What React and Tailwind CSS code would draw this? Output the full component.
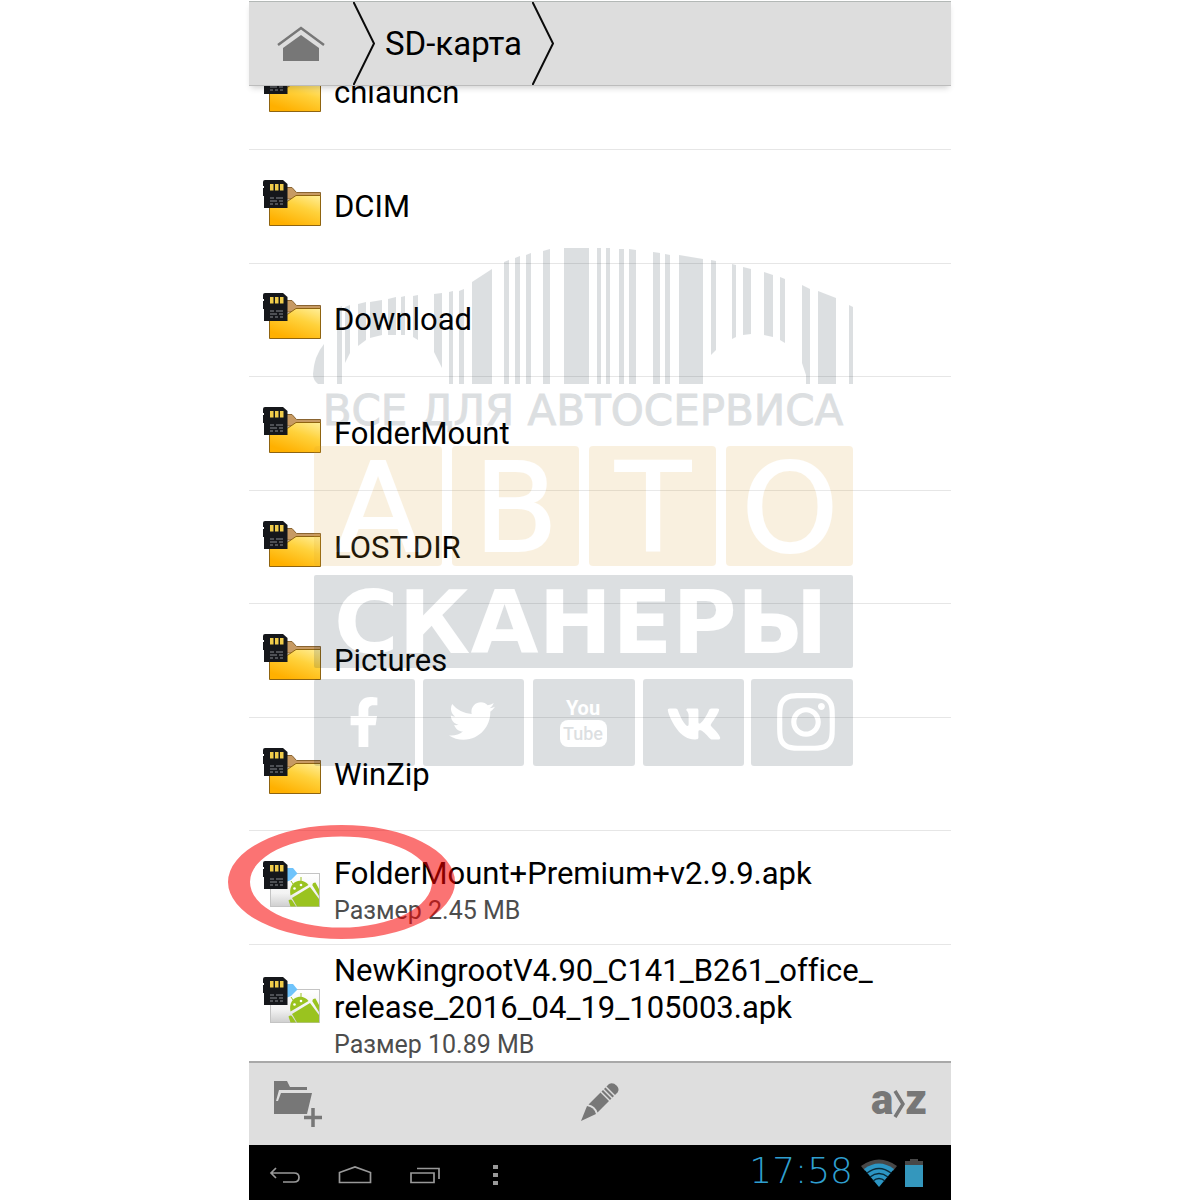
import React from 'react';
import { FaFacebookF, FaTwitter, FaVk, FaInstagram } from 'react-icons/fa';

const items = [
  { name: 'DCIM' },
  { name: 'Download' },
  { name: 'FolderMount' },
  { name: 'LOST.DIR' },
  { name: 'Pictures' },
  { name: 'WinZip' },
  { name: 'FolderMount+Premium+v2.9.9.apk', size: '2.45 MB', marked: true },
];

// [left, right, topLeft, topRight, bottomLeft, bottomRight]
const bars = [
  [24, 29, 60, 58, 136, 136],
  [32, 37, 59, 57, 115, 105],
  [45, 53, 56, 54, 98, 92],
  [57, 69, 54, 52, 90, 87],
  [75, 83, 51, 49, 87, 87],
  [88, 92, 49, 48, 87, 87],
  [100, 105, 48, 47, 89, 92],
  [121, 129, 46, 45, 104, 120],
  [136, 140, 44, 43, 136, 136],
  [146, 151, 43, 41, 136, 136],
  [159, 179, 34, 21, 136, 136],
  [191, 196, 14, 12, 136, 136],
  [202, 207, 10, 8, 136, 136],
  [213, 218, 7, 5, 136, 136],
  [230, 237, 3, 1, 136, 136],
  [251, 276, 0, 0, 136, 136],
  [284, 288, 0, 0, 136, 136],
  [293, 297, 0, 0, 136, 136],
  [306, 311, 1, 1, 136, 136],
  [316, 323, 1, 2, 136, 136],
  [340, 347, 4, 5, 136, 136],
  [352, 357, 6, 7, 136, 136],
  [366, 390, 7, 11, 136, 136],
  [398, 403, 12, 13, 107, 102],
  [419, 423, 16, 17, 91, 89],
  [430, 438, 19, 21, 87, 86],
  [451, 460, 24, 27, 87, 89],
  [467, 472, 29, 31, 92, 95],
  [505, 523, 43, 50, 136, 136],
  [536, 540, 57, 59, 136, 136],
];

const tiles = [
  { letter: 'А', x: 1, width: 128 },
  { letter: 'В', x: 139, width: 127 },
  { letter: 'Т', x: 276, width: 127 },
  { letter: 'О', x: 413, width: 127 },
];

function SdCard() {
  return (
    <g>
      <path d="M2 1H20L24.500 5V29H1V17H0V9H1V7H0V3Q0 1 2 1Z" fill="#15171b" />
      <path d="M7 5h3.500v6.500H7zM12 5h3.500v6.500H12zM17 5h3.500v6.500H17z" fill="#f0cc4a" />
      <path d="M7 19h4M13 19h7M7 22h7M16 22h4M7 25h3M12 25h3M17 25h3" stroke="#888b90" strokeWidth="1" />
    </g>
  );
}

function FolderIcon() {
  return (
    <svg className="w-[58px] h-[55px] shrink-0" viewBox="0 0 58 55">
      <defs>
        <linearGradient id="folderFront" x1="1" y1="0" x2="0.400" y2="1">
          <stop offset="0" stopColor="#ffef9a" />
          <stop offset="0.450" stopColor="#ffd23c" />
          <stop offset="1" stopColor="#ffb000" />
        </linearGradient>
      </defs>
      <path d="M22 8.500H29L33.500 13.500H57.500V20H22Z" fill="#c79a63" stroke="#8a6430" />
      <path d="M6.500 22H25L33 16.500H57.500V46.500H6.500Z" fill="url(#folderFront)" stroke="#8f6410" />
      <SdCard />
    </svg>
  );
}

function ApkIcon() {
  return (
    <svg className="w-[58px] h-[55px] shrink-0" viewBox="0 0 58 55">
      <defs>
        <linearGradient id="apkCard" x1="0" y1="0" x2="0" y2="1">
          <stop offset="0" stopColor="#ffffff" />
          <stop offset="0.600" stopColor="#f3f3f3" />
          <stop offset="1" stopColor="#cfcfcf" />
        </linearGradient>
      </defs>
      <rect x="7.500" y="13.500" width="49" height="33" fill="url(#apkCard)" stroke="#c4c4c4" />
      <path d="M23 8H30L34.500 13.500L28 20L23 22Z" fill="#6fc3fb" />
      <g fill="#9ac31f">
        <path d="M27.500 35.500C26 28 29 22.500 35 21C39 20 43.500 22 45.500 25Z" />
        <path d="M29 38L47 27L56 39V46.500H34Z" />
        <path d="M25.500 40.500Q28 38.500 29.500 41L33 46.500H27.500Z" />
        <path d="M49.500 25.500Q49 22.500 52.500 22.500L56 29V36Z" />
      </g>
      <path d="M30 24L28 21M38 21L38 17" stroke="#9ac31f" strokeWidth="1" />
      <circle cx="31.500" cy="28.500" r="1.300" fill="#fff" />
      <circle cx="38" cy="25" r="1.300" fill="#fff" />
      <SdCard />
    </svg>
  );
}

function Chevron() {
  return (
    <svg className="w-[22px] h-[83px] shrink-0" viewBox="0 0 22 83" fill="none">
      <path d="M0.500 0L21 41.500L0.500 83" stroke="#0a0a0a" strokeWidth="2" />
    </svg>
  );
}

function Watermark() {
  return (
    <svg
      className="absolute left-16 top-[162px] w-[540px] h-[520px] opacity-15 pointer-events-none"
      viewBox="0 0 540 520"
      aria-hidden="true"
    >
      <g fill="#1c3040">
        <path d="M11 96V136H5Q0 132 0 126Q1 108 11 96Z" />
        {bars.map(([l, r, tl, tr, bl, br]) => (
          <polygon key={l} points={`${l},${tl} ${r},${tr} ${r},${br} ${l},${bl}`} />
        ))}
        <path d="M489 37L497 41V136H493V127L489 115Z" />
        <text
          x="270"
          y="177"
          textAnchor="middle"
          fontSize="42"
          fontFamily="DejaVu Sans, sans-serif"
          stroke="#1c3040"
          strokeWidth="1"
        >
          ВСЕ ДЛЯ АВТОСЕРВИСА
        </text>
        <rect x="1" y="327" width="539" height="93" rx="2" />
        <rect x="1" y="431" width="101" height="87" rx="3" />
        <rect x="110" y="431" width="101" height="87" rx="3" />
        <rect x="220" y="431" width="102" height="87" rx="3" />
        <rect x="330" y="431" width="101" height="87" rx="3" />
        <rect x="438" y="431" width="102" height="87" rx="3" />
      </g>

      {tiles.map((t) => (
        <g key={t.letter}>
          <rect x={t.x} y="198" width={t.width} height="120" rx="4" fill="#dea230" />
          <text
            x={t.x + 64}
            y="303"
            textAnchor="middle"
            fontSize="123"
            fontFamily="DejaVu Sans, sans-serif"
            fill="#fff"
            stroke="#fff"
            strokeWidth="2"
          >
            {t.letter}
          </text>
        </g>
      ))}

      <text x="268" y="405" textAnchor="middle" fontSize="88" fontWeight="700" fontFamily="DejaVu Sans, sans-serif" fill="#fff">
        СКАНЕРЫ
      </text>

      <FaFacebookF x="26" y="449" size={50} color="#fff" />
      <FaTwitter x="136" y="450" size={46} color="#fff" />
      <FaVk x="353" y="448" size={56} color="#fff" />
      <FaInstagram x="460" y="441" size={66} color="#fff" />

      {/* YouTube */}
      <text x="270" y="467" textAnchor="middle" fontSize="20" fontWeight="700" fontFamily="Roboto, sans-serif" fill="#fff">
        You
      </text>
      <rect x="247" y="472" width="47" height="27" rx="8" fill="#fff" />
      <text x="270" y="492" textAnchor="middle" fontSize="18" fontWeight="500" fontFamily="Roboto, sans-serif" fill="#1c3040">
        Tube
      </text>
    </svg>
  );
}

function Row({ icon, title, size }) {
  return (
    <a href="#" className="flex items-center gap-[13px] w-full px-3.5">
      {icon}
      <div className={size ? 'pt-2' : ''}>
        <p className="text-[31px] leading-[37px] text-black">{title}</p>
        {size && <p className="text-[25px] leading-[37px] text-[#4d4d4d]">Размер {size}</p>}
      </div>
    </a>
  );
}

export default function App() {
  return (
    <div className="min-h-screen bg-white overflow-x-hidden [font-variant-ligatures:none] font-['Roboto','Noto_Sans',sans-serif]">
      <div className="flex flex-col min-h-screen w-full max-w-[702px] mx-auto">
        {/* Breadcrumbs */}
        <header className="relative z-10 mt-px h-[85px] shrink-0 flex items-center bg-[#ddd] border-t border-b border-t-[#b3b8b6] border-b-[#bcbcbc] shadow-[0_4px_6px_-2px_rgba(0,0,0,0.18)]">
          <button aria-label="Home" className="pl-7 pr-7">
            <svg className="w-12 h-9" viewBox="0 0 48 36" fill="none">
              <path d="M1 19L24 2L47 19" stroke="#777" strokeWidth="2.500" />
              <path d="M24 9L42 22V35H6V22Z" fill="#777" />
            </svg>
          </button>
          <Chevron />
          <a href="#" className="px-2.5 text-[33px] leading-[37px] text-black">SD-карта</a>
          <Chevron />
        </header>

        <main className="relative flex-1 flex flex-col">
          <ul className="flex-1 flex flex-col">
            {/* scrolled half way under the header */}
            <li className="h-16 shrink-0 overflow-hidden flex items-end border-b border-[#e6e6e6]">
              <div className="h-[114px] w-full shrink-0 flex">
                <Row icon={<FolderIcon />} title="cnlaunch" />
              </div>
            </li>
            {items.map((item) => (
              <li key={item.name} className="relative grow basis-28 flex border-b border-[#e6e6e6]">
                <Row
                  icon={item.size ? <ApkIcon /> : <FolderIcon />}
                  title={item.name}
                  size={item.size}
                />
                {item.marked && (
                  <svg
                    className="absolute -left-[21px] -top-[6px] w-[228px] h-[114px] pointer-events-none"
                    viewBox="0 0 228 114"
                  >
                    <path
                      fillRule="evenodd"
                      fill="#f80000"
                      fillOpacity="0.550"
                      d="M0 57A113.500 57 0 0 1 227 57A113.500 57 0 0 1 0 57ZM22 57A91 45.500 0 0 0 204 57A91 45.500 0 0 0 22 57Z"
                    />
                  </svg>
                )}
              </li>
            ))}
            <li className="h-[116px] shrink-0 flex">
              <Row
                icon={<ApkIcon />}
                title={<>NewKingrootV4.90_C141_B261_office_<br />release_2016_04_19_105003.apk</>}
                size="10.89 MB"
              />
            </li>
          </ul>
          <Watermark />
        </main>

        {/* Actions */}
        <div className="relative h-[84px] shrink-0 grid grid-cols-3 items-center px-6 bg-[#dedede] border-t-2 border-[#a9a9a9]">
          <button aria-label="New folder" className="justify-self-start">
            <svg className="w-[50px] h-[48px]" viewBox="0 0 50 48">
              <path d="M1 1H14L17 7H34V10H6L3 21L5 21L8 13H39L34 34H1Z" fill="#777" />
              <path d="M40 28V47M31 37.500H49" stroke="#777" strokeWidth="3.500" />
            </svg>
          </button>
          <button aria-label="Edit" className="justify-self-center pb-1">
            <svg className="w-10 h-10" viewBox="0 0 40 40" fill="#777">
              <path d="M1 39L7 24Q14 25 16 32Z" />
              <path d="M8.500 22.500L20.500 10.500L29 19L17.500 30.500Q15.500 24 8.500 22.500Z" />
              <path d="M21.500 9.500L23 8L31.500 16.500L30 18ZM24 7L25.500 5.500L34 14L32.500 15.500Z" />
              <path d="M26.500 4.500L29 2Q33 0 36.500 3.500Q40 7 37.500 10.500L35 13Z" />
            </svg>
          </button>
          <button aria-label="Sort" className="justify-self-end flex items-center pb-2 text-[42px] leading-[44px] font-black text-[#777]">
            a
            <svg className="w-3 h-7 mt-2" viewBox="0 0 12 28" fill="none">
              <path d="M2 1L10 14L2 27" stroke="#777" strokeWidth="3.500" />
            </svg>
            z
          </button>
        </div>

        {/* System bar */}
        <nav className="h-[55px] shrink-0 flex items-center justify-between pl-5 pr-7 bg-black">
          <div className="flex items-center gap-[37px] pt-1">
            <button aria-label="Back">
              <svg className="w-8 h-5" viewBox="0 0 32 20" fill="none" stroke="#999" strokeWidth="1.700">
                <path d="M7 3L2 8L7 13M2 8H25Q30 8 30 12.500Q30 17 25 17H14" />
              </svg>
            </button>
            <button aria-label="Home screen">
              <svg className="w-[34px] h-5" viewBox="0 0 34 20" fill="none" stroke="#999" strokeWidth="1.700">
                <path d="M1.500 17.500V7.500L17 2L32.500 7.500V17.500Z" />
              </svg>
            </button>
            <button aria-label="Recent apps">
              <svg className="w-8 h-5" viewBox="0 0 32 20" fill="none" stroke="#999" strokeWidth="1.700">
                <path d="M2 8H25V17.500H2ZM8 3.500H30V14" />
              </svg>
            </button>
            <button aria-label="Menu" className="pl-3">
              <svg className="w-5 h-5" viewBox="0 0 20 20" fill="#999">
                <path d="M3 0h5v4H3zM3 8h5v4H3zM3 16h5v4H3z" />
              </svg>
            </button>
          </div>
          <div className="flex items-center gap-2">
            <time className="text-[36px] leading-[40px] pb-1 font-extralight text-[#2f9fcf] font-['DejaVu_Sans',sans-serif]">17:58</time>
            <svg className="w-9 h-7" viewBox="0 0 36 28">
              <path d="M0 7Q18 -6 36 7L32 12Q18 1 4 12Z" fill="#484848" />
              <path d="M3 10Q18 -1 33 10L18 28Z" fill="#2c96c4" />
              <path d="M6 14Q18 5 30 14M9 18Q18 11 27 18M12 22Q18 17 24 22" stroke="#0a2a38" strokeWidth="1.500" fill="none" />
            </svg>
            <svg className="w-[18px] h-7" viewBox="0 0 18 28">
              <path d="M5 0H13V2H18V7H0V2H5Z" fill="#484848" />
              <path d="M0 6H18V28H0Z" fill="#3497bd" />
            </svg>
          </div>
        </nav>
      </div>
    </div>
  );
}
